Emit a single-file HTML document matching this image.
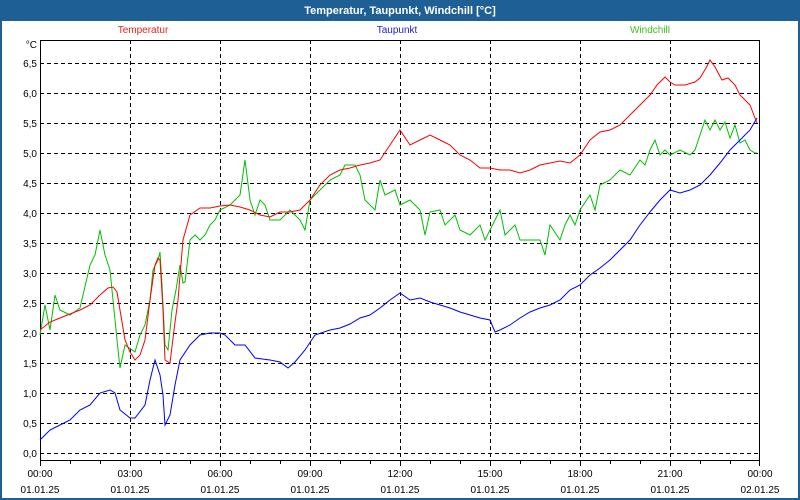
<!DOCTYPE html>
<html><head><meta charset="utf-8"><style>
html,body{margin:0;padding:0;width:800px;height:500px;overflow:hidden;background:#1e5f96;}
svg{display:block}
text{font-family:"Liberation Sans",sans-serif;font-size:10px;}
</style></head><body>
<svg width="800" height="500" viewBox="0 0 800 500">
<rect x="0" y="0" width="800" height="500" fill="#1e5f96"/>
<rect x="2" y="21" width="796" height="477" fill="#fff"/>
<text x="400" y="14" text-anchor="middle" fill="#fff" font-weight="bold" style="font-size:11px">Temperatur, Taupunkt, Windchill [°C]</text>
<text x="143" y="33" text-anchor="middle" fill="#e8201c">Temperatur</text>
<text x="397" y="33" text-anchor="middle" fill="#2020d0">Taupunkt</text>
<text x="650" y="33" text-anchor="middle" fill="#40c020">Windchill</text>
<g stroke="#000" stroke-dasharray="4,3" stroke-width="1">
<path d="M40 63.5H760M40 93.5H760M40 123.5H760M40 153.5H760M40 183.5H760M40 213.5H760M40 243.5H760M40 273.5H760M40 303.5H760M40 333.5H760M40 363.5H760M40 393.5H760M40 423.5H760M40 453.5H760"/>
<path d="M130.5 40V460M220.5 40V460M310.5 40V460M400.5 40V460M490.5 40V460M580.5 40V460M670.5 40V460"/>
</g>
<rect x="40.5" y="40.5" width="719" height="420" fill="none" stroke="#000"/>
<g stroke="#000"><path d="M40.5 460V466M70.5 460V464M100.5 460V464M130.5 460V466M160.5 460V464M190.5 460V464M220.5 460V466M250.5 460V464M280.5 460V464M310.5 460V466M340.5 460V464M370.5 460V464M400.5 460V466M430.5 460V464M460.5 460V464M490.5 460V466M520.5 460V464M550.5 460V464M580.5 460V466M610.5 460V464M640.5 460V464M670.5 460V466M700.5 460V464M730.5 460V464M759.5 460V466"/></g>
<g text-anchor="end" fill="#000">
<text x="37" y="48">°C</text>
<text x="37" y="67">6,5</text><text x="37" y="97">6,0</text><text x="37" y="127">5,5</text><text x="37" y="157">5,0</text><text x="37" y="187">4,5</text><text x="37" y="217">4,0</text><text x="37" y="247">3,5</text><text x="37" y="277">3,0</text><text x="37" y="307">2,5</text><text x="37" y="337">2,0</text><text x="37" y="367">1,5</text><text x="37" y="397">1,0</text><text x="37" y="427">0,5</text><text x="37" y="457">0,0</text>
</g>
<g text-anchor="middle" fill="#000">
<text x="40" y="477">00:00</text><text x="130" y="477">03:00</text><text x="220" y="477">06:00</text><text x="310" y="477">09:00</text><text x="400" y="477">12:00</text><text x="490" y="477">15:00</text><text x="580" y="477">18:00</text><text x="670" y="477">21:00</text><text x="760" y="477">00:00</text>
<text x="40" y="493">01.01.25</text><text x="130" y="493">01.01.25</text><text x="220" y="493">01.01.25</text><text x="310" y="493">01.01.25</text><text x="400" y="493">01.01.25</text><text x="490" y="493">01.01.25</text><text x="580" y="493">01.01.25</text><text x="670" y="493">01.01.25</text><text x="760" y="493">02.01.25</text>
</g>
<polyline fill="none" stroke="#00c000" points="40,335 45,305 50,330 55,295 60,310 70,315 80,308 90,265 95,255 100,230 105,255 110,270 113,300 117,340 120,368 125,345 135,352 140,335 145,325 150,300 153,270 158,260 160,252 162,285 165,345 168,350 172,310 176,290 180,265 183,283 185,282 190,240 195,235 200,240 205,235 210,225 215,220 220,210 230,205 240,195 245,160 250,200 255,215 260,200 265,205 270,220 280,220 290,210 300,220 305,230 310,200 320,190 330,180 340,175 345,165 355,165 360,175 365,200 375,210 380,180 385,195 395,190 400,205 410,200 420,210 425,235 430,212 440,210 445,225 455,215 460,230 470,235 480,225 485,240 490,230 500,210 505,235 515,225 520,240 530,240 540,240 545,255 550,225 560,240 565,225 570,215 575,225 580,210 590,195 595,210 600,185 610,180 620,170 630,175 640,160 645,165 650,150 655,140 660,155 665,150 670,155 680,150 690,155 695,150 700,135 705,120 710,130 715,120 720,130 725,122 730,138 735,125 740,143 745,140 750,150 755,153 757,153"/>
<polyline fill="none" stroke="#ff0000" points="40,330 50,322 60,318 80,310 90,305 100,295 108,288 113,287 117,292 120,310 125,340 130,352 135,360 140,355 145,340 150,300 155,265 158,258 160,260 163,310 165,360 170,363 174,330 178,300 183,240 190,215 200,208 210,208 220,206 230,205 240,207 250,210 260,215 270,217 280,212 290,212 300,210 310,200 320,185 330,175 340,170 350,168 360,165 370,163 380,160 390,145 400,130 410,145 420,140 430,135 440,140 450,145 460,155 470,160 480,168 490,168 500,170 510,170 520,173 530,170 540,165 550,163 560,161 570,163 580,155 590,140 600,132 610,130 620,125 630,115 640,105 650,95 657,85 665,77 670,82 675,85 685,85 695,82 700,78 706,68 710,60 715,67 722,80 728,78 735,85 740,95 745,100 750,105 755,118 757,123"/>
<polyline fill="none" stroke="#0000ff" points="40,440 50,430 60,425 70,420 80,410 90,405 100,393 110,390 115,393 120,410 130,418 135,418 145,405 150,380 155,360 160,375 163,395 165,425 170,415 175,385 180,360 190,345 200,335 210,333 220,333 225,335 235,345 245,345 255,358 270,360 280,362 288,368 295,362 305,350 315,335 330,330 340,328 350,324 360,318 370,315 380,308 390,300 400,293 410,300 420,298 430,302 440,305 450,308 460,312 470,315 480,318 490,320 495,332 500,330 510,325 520,318 530,312 540,308 550,305 560,300 570,290 580,285 590,275 600,268 610,260 620,250 630,240 640,225 650,212 660,200 670,190 680,193 690,190 700,185 710,175 720,163 730,150 740,140 750,130 757,118"/>
</svg>
</body></html>
